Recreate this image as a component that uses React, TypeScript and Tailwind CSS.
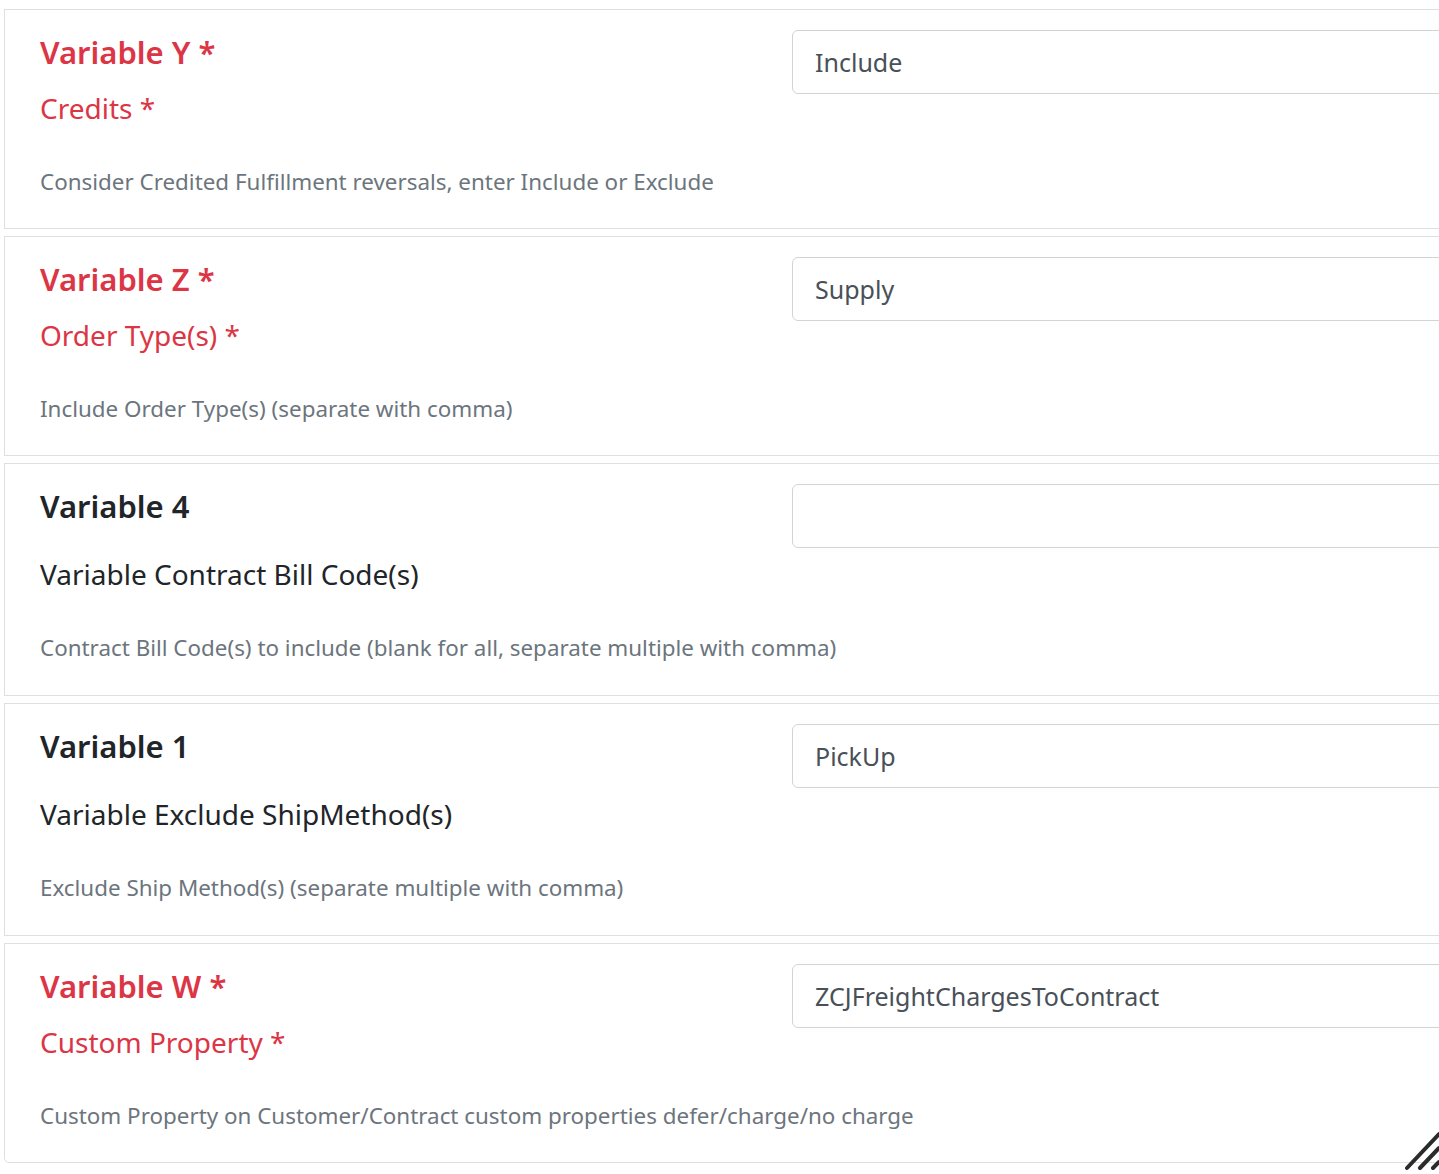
import React from 'react';

type Field = {
  title: string;
  label: string;
  help: string;
  value: string;
  required: boolean;
};

const fields: Field[] = [
  {
    title: 'Variable Y',
    label: 'Credits',
    help: 'Consider Credited Fulfillment reversals, enter Include or Exclude',
    value: 'Include',
    required: true,
  },
  {
    title: 'Variable Z',
    label: 'Order Type(s)',
    help: 'Include Order Type(s) (separate with comma)',
    value: 'Supply',
    required: true,
  },
  {
    title: 'Variable 4',
    label: 'Variable Contract Bill Code(s)',
    help: 'Contract Bill Code(s) to include (blank for all, separate multiple with comma)',
    value: '',
    required: false,
  },
  {
    title: 'Variable 1',
    label: 'Variable Exclude ShipMethod(s)',
    help: 'Exclude Ship Method(s) (separate multiple with comma)',
    value: 'PickUp',
    required: false,
  },
  {
    title: 'Variable W',
    label: 'Custom Property',
    help: 'Custom Property on Customer/Contract custom properties defer/charge/no charge',
    value: 'ZCJFreightChargesToContract',
    required: true,
  },
];

const FieldCard: React.FC<{ field: Field; last: boolean }> = ({ field, last }) => {
  const req = field.required;
  return (
    <div
      className={
        'flex w-[1520px] shrink-0 border border-[#dfdfdf] bg-white ' +
        (last ? 'rounded-bl-[5px]' : '')
      }
    >
      <div className={'w-[787px] shrink-0 pl-[35px] pt-[23px] ' + (req ? 'pb-[30px]' : 'pb-[31px]')}>
        <h4
          className={
            'whitespace-nowrap text-[31px] font-semibold leading-[38px] ' +
            (req ? 'text-[#dc3545]' : 'text-[#212529]')
          }
        >
          {field.title}
          {req && ' *'}
        </h4>
        <div
          className={
            'whitespace-nowrap text-[28px] leading-[40px] ' +
            (req ? 'mt-[17px] text-[#dc3545]' : 'mt-[29px] text-[#212529]')
          }
        >
          {field.label}
          {req && ' *'}
        </div>
        <div className="mt-[38px] whitespace-nowrap text-[22.4px] leading-[32px] text-[#6c757d]">
          {field.help}
        </div>
      </div>
      <div className="pt-[20px]">
        <input
          type="text"
          defaultValue={field.value}
          className="h-[64px] w-[700px] rounded-[6px] border border-[#ced4da] bg-white px-[22px] text-[25px] text-[#495057] outline-none"
        />
      </div>
    </div>
  );
};

export default function App() {
  return (
    <div
      className="relative h-[1174px] w-[1439px] overflow-hidden bg-white pl-[4px] pt-[9px]"
      style={{ fontFamily: '"Noto Sans", "Open Sans", sans-serif' }}
    >
      <div className="flex flex-col gap-[7px]">
        {fields.map((f, i) => (
          <FieldCard key={f.title} field={f} last={i === fields.length - 1} />
        ))}
      </div>
      <svg
        className="absolute bottom-[2px] right-0"
        width="36"
        height="42"
        viewBox="0 0 36 42"
      >
        <g stroke="#2b2b2b" strokeWidth="4" strokeLinecap="round">
          <line x1="4" y1="38" x2="36" y2="4" />
          <line x1="17" y1="38" x2="36" y2="18" />
          <line x1="30" y1="38" x2="36" y2="32" />
        </g>
      </svg>
    </div>
  );
}
